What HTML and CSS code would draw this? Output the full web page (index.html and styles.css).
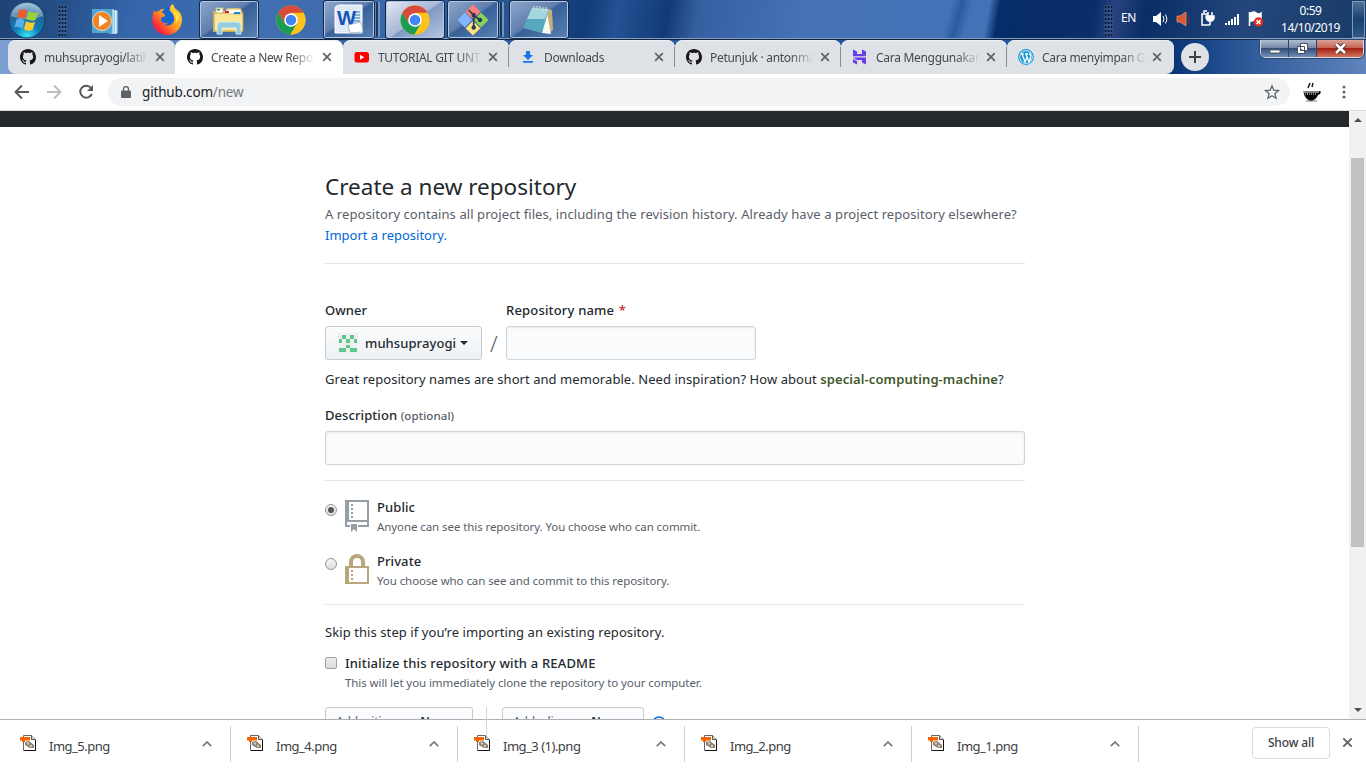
FILE: index.html
```html
<!DOCTYPE html>
<html lang="en">
<head>
<meta charset="utf-8">
<title>Create a New Repository</title>
<link rel="stylesheet" href="styles.css">
</head>
<body>
<svg class="defs" width="0" height="0">
  <defs>
    <symbol id="octocat" viewBox="0 0 16 16"><path fill="#191717" fill-rule="evenodd" d="M8 0C3.58 0 0 3.58 0 8c0 3.54 2.29 6.53 5.47 7.59.4.07.55-.17.55-.38 0-.19-.01-.82-.01-1.49-2.01.37-2.53-.49-2.69-.94-.09-.23-.48-.94-.82-1.13-.28-.15-.68-.52-.01-.53.63-.01 1.08.58 1.23.82.72 1.21 1.87.87 2.33.66.07-.52.28-.87.51-1.07-1.78-.2-3.64-.89-3.64-3.95 0-.87.31-1.59.82-2.15-.08-.2-.36-1.02.08-2.12 0 0 .67-.21 2.2.82.64-.18 1.32-.27 2-.27s1.36.09 2 .27c1.53-1.04 2.2-.82 2.2-.82.44 1.1.16 1.92.08 2.12.51.56.82 1.27.82 2.15 0 3.07-1.87 3.75-3.65 3.95.29.25.54.73.54 1.48 0 1.07-.01 1.93-.01 2.2 0 .21.15.46.55.38A8.01 8.01 0 0 0 16 8c0-4.42-3.58-8-8-8z"/></symbol>
    <symbol id="close" viewBox="0 0 10 10"><path d="M1.2 1.2l7.6 7.6M8.800 1.200L1.200 8.800" stroke="#5f6368" stroke-width="1.700"/></symbol>
    <symbol id="chrome" viewBox="0 0 30 30"><circle cx="15" cy="15" r="14.500" fill="#fbc116"/><path d="M2.440 7.750A14.500 14.500 0 0 0 14.500 29.500L21.200 18.500L9 18.500z" fill="#1a9c55"/><path d="M27.500 7.750A14.500 14.500 0 0 1 14.500 29.500L21.300 18V8z" fill="#fcc31e"/><path d="M2.440 7.750A14.500 14.500 0 0 1 27.560 7.750H15L9 18.500z" fill="#d84a3a"/><circle cx="15" cy="15" r="6.800" fill="#fff"/><circle cx="15" cy="15" r="5.300" fill="#4285f4"/></symbol>
    <symbol id="pngfile" viewBox="0 0 17 17"><path d="M3.500.5h8l4 4v11h-12z" fill="#fff" stroke="#666"/><path d="M15.500 5v10.500H4" fill="none" stroke="#111"/><path d="M11.500.5v4h4" fill="#ddd" stroke="#555"/><path d="M0 2h10v3.500H5v1.500H2V5.500H0z" fill="#f76500"/><path d="M5 7l4-1 5 4v3h-4l-5-3z" fill="#8f7f69"/><circle cx="8" cy="8.500" r="1.200" fill="#ccc"/><circle cx="11" cy="11" r="1.200" fill="#ccc"/></symbol>
    <symbol id="caret" viewBox="0 0 10 6"><path d="M.8 5.200L5 1l4.200 4.200" fill="none" stroke="#777a7d" stroke-width="1.700"/></symbol>
  </defs>
</svg>

<div class="taskbar">
  <svg class="orb" width="40" height="40"><defs><radialGradient id="og" cy=".95" r=".9"><stop offset="0" stop-color="#39e6f5"/><stop offset=".4" stop-color="#107bb8"/><stop offset=".75" stop-color="#236494"/><stop offset="1" stop-color="#8bb1cc"/></radialGradient></defs><circle cx="20" cy="20" r="18" fill="url(#og)" stroke="#123a66"/><path d="M4 16A16.500 16.500 0 0 1 36 16Q20 23 4 16z" fill="#b7d3e5" opacity=".45"/><path d="M12 10q5-2 8 1l-2 8q-4-3-8-1z" fill="#ef5a29"/><path d="M21.500 11q4 3 10 1l-3 8q-4 2-9-1z" fill="#9bcf3b"/><path d="M9.500 19.500q4-2 8 1l-2 8q-4-3-8-1z" fill="#5bb2ef"/><path d="M19 21q4 3 9 1l-2.500 8q-5 2-8.500-1z" fill="#fecc2c"/></svg>
  <div class="grip grip-left"></div>
  <svg class="media" width="28" height="28"><path d="M18 3h8v22h-8z" fill="#8ccbe5" stroke="#cdeaf5"/><path d="M1 1h21v24H1z" fill="#4fa5cd"/><path d="M22 1v25M24.500 2v24" stroke="#e3f5fb"/><circle cx="11" cy="13" r="9.500" fill="#f58220" stroke="#d9ddd9"/><path d="M8 7v12l9-6z" fill="#fff"/></svg>
  <svg class="firefox" width="32" height="32"><defs><linearGradient id="fg" x1="1" y1="0" x2="0" y2="1"><stop offset="0" stop-color="#fff044"/><stop offset=".5" stop-color="#ff9520"/><stop offset=".8" stop-color="#fa243d"/><stop offset="1" stop-color="#e3106d"/></linearGradient></defs><circle cx="16" cy="15" r="11.500" fill="#1468cd"/><path d="M3 6q-4 12 1 19 5 6 13 6 13-2 14-15 0-7-5-10-3-2-4-6-4 2-3 7 5 4 4 10-3 6-10 4 3 0 4-2-6 1-7-3 0-2 1-3 3 0 3-2-1-2-3-2 0-3 3-4-4-1-6 2l-4 1z" fill="url(#fg)"/><path d="M22 7q5 7 2 13 3-3 4-7 0-4-6-6z" fill="#ffe644"/></svg>
  <div class="app-button explorer"><svg width="36" height="32"><path d="M2 7h12l2-3h12l4 4v20H2z" fill="#d8bd5e"/><path d="M3 9h29v18H3z" fill="#fbe795" stroke="#bd9f44"/><path d="M5 4h7v5H5zM16 5h14v5H16z" fill="#fff" stroke="#cfbb72"/><path d="M6 5h3v1.500H6z" fill="#22a03f"/><path d="M14 7h4v2h-4z" fill="#d23"/><path d="M23 8h6v2h-6z" fill="#28c"/><path d="M6 30v-9q0-3 4-3h16q4 0 4 3v9h-5v-6H11v6z" fill="#8dcae4" stroke="#d6f4fc" opacity=".9"/></svg></div>
  <svg class="loose-chrome" width="30" height="30"><use href="#chrome"/></svg>
  <div class="app-button stacked word"><svg width="32" height="32"><path d="M7 1h22v28H2V5q0-4 5-4z" fill="#dfeaf6" stroke="#fff"/><path d="M20 8h7M20 11h7M20 14h7M20 17h7" stroke="#6c9bcf" stroke-width="1.500"/><text x="4" y="21" class="word-letter" textLength="19" lengthAdjust="spacingAndGlyphs">W</text><path d="M15 21l13-3 2 10-13 1z" fill="#fff" stroke="#8fa2bd" stroke-width=".7"/></svg></div>
  <div class="app-button chrome-button"><svg width="30" height="30"><use href="#chrome"/></svg></div>
  <div class="app-button stacked git"><svg width="34" height="34"><g transform="rotate(45 17 17)"><path d="M6 6h10.500v10.500H6z" fill="#ff7f7b"/><path d="M17.500 6H28v10.500H17.500z" fill="#88d15e"/><path d="M17.500 17.500H28V28H17.500z" fill="#ffe27d"/><path d="M6 17.500h10.500V28H6z" fill="#82b5ff"/></g><path d="M12.500 7l5.200 5v12M17.700 12l6 5" fill="none" stroke="#2b3c50" stroke-width="1.700"/><circle cx="17.700" cy="12" r="2.200" fill="#2b3c50"/><circle cx="24" cy="17" r="2.200" fill="#2b3c50"/><circle cx="17.700" cy="24.500" r="2.200" fill="#2b3c50"/></svg></div>
  <div class="app-button notepad"><svg width="34" height="32"><path d="M24 5l6 1 1 20-6 4z" fill="#c9b07a"/><path d="M24 4l5 26-9-1z" fill="#f7f9f4"/><path d="M10 4l17 1-7 24L1 24z" fill="#58a9bd"/><path d="M10 4l17 1-4 10L5 15z" fill="#a3d6dd"/><path d="M12 2v4M15 2v4M18 2v4M21 3v4M24 3v4" stroke="#d9e2da"/></svg></div>
  <div class="tray">
    <div class="grip"></div>
    <span class="language">EN</span>
    <svg class="tray-icons" width="112" height="24"><path d="M0 9h3l5-4v14l-5-4H0z" fill="#fff"/><path d="M10 9q2 3 0 6M12.500 7.500q3 4.500 0 9" fill="none" stroke="#fff"/><path d="M24 9h3l6-4v14l-6-4h-3z" fill="#d65732" stroke="#ffad8b" stroke-width=".6"/><path d="M35 8q3 4 0 8" fill="none" stroke="#8a3439"/><path d="M57 18h-8V7h6M51 6V4h3" fill="none" stroke="#fff" stroke-width="1.500"/><path d="M53 9h8v2q-1 3-3 3h-2q-3-1-3-5zM55 9V5M59 9V5M57 14v4" fill="#fff" stroke="#fff" stroke-width="1.500"/><path d="M72 18v-2h2v2zM75 18v-4h2v4zM78 18v-6h2v6zM81 18v-8h2v8zM84 18V7h2v11z" fill="#fff"/><path d="M96.500 5v14M98 6q3-2 5 0t5 0v8q-3 1-5 0t-5 0z" fill="#fff" stroke="#fff" stroke-width="1.500"/><circle cx="105.500" cy="15" r="4.700" fill="#e32b25"/><path d="M103.500 13l4 4M107.500 13l-4 4" stroke="#fff" stroke-width="1.500"/></svg>
    <div class="clock"><span class="time">0:59</span><span class="date">14/10/2019</span></div>
    <div class="show-desktop"></div>
  </div>
</div>

<div class="tabstrip">
  <div class="tab first"><svg class="favicon"><use href="#octocat"/></svg><span class="tab-title">muhsuprayogi/latih</span><svg class="tab-close"><use href="#close"/></svg></div>
  <div class="tab active"><svg class="favicon"><use href="#octocat"/></svg><span class="tab-title">Create a New Repo</span><svg class="tab-close"><use href="#close"/></svg></div>
  <div class="tab"><svg class="favicon" viewBox="0 0 16 16"><rect x=".5" y="3" width="14.500" height="10.500" rx="2.500" fill="#f00"/><path d="M6 5.700v5l4.300-2.500z" fill="#fff"/></svg><span class="tab-title">TUTORIAL GIT UNT</span><svg class="tab-close"><use href="#close"/></svg></div>
  <div class="tab divided"><svg class="favicon" viewBox="0 0 16 16"><path d="M6 2h4v4h3L8 11 3 6h3zM3 12h10v1.700H3z" fill="#1a73e8"/></svg><span class="tab-title">Downloads</span><svg class="tab-close"><use href="#close"/></svg></div>
  <div class="tab divided"><svg class="favicon"><use href="#octocat"/></svg><span class="tab-title">Petunjuk · antonma</span><svg class="tab-close"><use href="#close"/></svg></div>
  <div class="tab divided"><svg class="favicon" viewBox="0 0 16 16"><path d="M1 .5l4 2V5h5l4 2.300H1zM10 .5l4 2V7l-4-2zM1 8.500h13v7l-4-2V11H5L1 8.500zM1 10l4 2v3.500l-4-2z" fill="#673de6"/></svg><span class="tab-title">Cara Menggunakan</span><svg class="tab-close"><use href="#close"/></svg></div>
  <div class="tab divided last"><svg class="favicon" viewBox="0 0 16 16"><circle cx="8" cy="8" r="7.300" fill="#fff" stroke="#1998d0" stroke-width="1.200"/><circle cx="8" cy="8" r="6" fill="#1998d0"/><path d="M2.800 5h3M4 5l3 8 2-5M7 5h3M8 5l3 8 2-6q-2-2-1-3" fill="none" stroke="#fff" stroke-width="1.300"/></svg><span class="tab-title">Cara menyimpan G</span><svg class="tab-close"><use href="#close"/></svg></div>
  <div class="new-tab"><svg width="14" height="14"><path d="M7 1v12M1 7h12" stroke="#3c4043" stroke-width="2"/></svg></div>
  <div class="window-buttons">
    <div class="window-button minimize"><svg width="12" height="5"><path d="M1 1h10v3H1z" fill="#fff" stroke="#525963"/></svg></div>
    <div class="window-button restore"><svg width="13" height="13"><path d="M4.500 1.500h7v7h-7zM1.500 4.500h7v7h-7z" fill="#fff" stroke="#475365"/><path d="M4 7h2v2H4z" fill="#475365"/></svg></div>
    <div class="window-button shut"><svg width="13" height="11"><path d="M2 1l9 9M11 1L2 10" stroke="#542a2b" stroke-width="4.500"/><path d="M2 1l9 9M11 1L2 10" stroke="#fff" stroke-width="2.600"/></svg></div>
  </div>
</div>

<div class="toolbar">
  <svg class="nav-icons" width="94" height="36"><path d="M29 18H16M22 11.500L15.500 18l6.500 6.500" fill="none" stroke="#55585c" stroke-width="1.900"/><path d="M47 18h13M54 11.500l6.500 6.500-6.500 6.500" fill="none" stroke="#bbbdbf" stroke-width="1.900"/><path d="M91 14a6 6 0 1 0 .8 6" fill="none" stroke="#55585c" stroke-width="2"/><path d="M93 11v6h-6z" fill="#55585c"/></svg>
  <div class="omnibox">
    <svg class="lock" width="10" height="12"><path d="M1 4.500h8q1 0 1 1V11q0 1-1 1H1q-1 0-1-1V5.500q0-1 1-1z" fill="#5f6368"/><path d="M2.500 5V3a2.500 2.500 0 0 1 5 0v2" fill="none" stroke="#5f6368" stroke-width="1.300"/></svg>
    <span class="address">github.com<span class="path">/new</span></span>
    <svg class="star" viewBox="0 0 16 16"><path d="M8 1.900l1.800 4.300 4.700.4-3.600 3 1.100 4.600-4-2.400-4 2.400 1.100-4.600-3.600-3 4.700-.4z" fill="none" stroke="#5f6368" stroke-width="1.300"/></svg>
  </div>
  <svg class="extension" width="20" height="22"><path d="M6 7l2-5M10 6l1-4" stroke="#111" stroke-width="1.400"/><path d="M1 10h16q3 0 1 3l-2 1q-2 5-7 6-6-1-8-10z" fill="#050505"/><path d="M1 11h16" stroke="#fff"/><path d="M3 13h12" stroke="#fff" stroke-dasharray="1 1"/><path d="M4 20h11" stroke="#777"/></svg>
  <svg class="more" width="4" height="14"><circle cx="2" cy="2" r="1.500"/><circle cx="2" cy="7" r="1.500"/><circle cx="2" cy="12" r="1.500"/></svg>
</div>

<div class="viewport">
  <div class="site-page">
    <div class="site-header"></div>
    <main class="form">
      <h1 class="heading">Create a new repository</h1>
      <p class="intro"><span class="intro-line">A repository contains all project files, including the revision history. Already have a project repository elsewhere?</span><br><a class="link">Import a repository.</a></p>
      <div class="name-row">
        <div class="owner-field"><label class="label">Owner</label><div class="owner-button"><svg class="avatar" width="20" height="20"><path d="M0 0h20v20H0z" fill="#f0f0f0"/><path d="M4 2h4v4h4V2h4v4h3v4h-3V6h-4v4H8V6H4v4H1V6h3zM8 12h4v3h7v4h-7v-4H8v4H1v-4h7z" fill="#5bc98b"/></svg><span class="owner-name">muhsuprayogi</span><span class="drop-arrow"></span></div></div>
        <span class="slash">/</span>
        <div class="repo-field"><label class="label repo-label">Repository name <span class="required">*</span></label><div class="input"></div></div>
      </div>
      <p class="hint"><span class="hint-text">Great repository names are short and memorable. Need inspiration? How about </span><strong class="suggestion">special-computing-machine</strong>?</p>
      <label class="label description-label">Description <span class="optional">(optional)</span></label>
      <div class="input"></div>
      <div class="visibility">
        <div class="choice"><span class="radio checked"></span><svg class="choice-icon" width="24" height="32"><path d="M1 1h22v25H1zM1 21h22" fill="none" stroke="#959da5" stroke-width="2"/><path d="M0 0h4v21H0z" fill="#959da5"/><path d="M7 4v15" stroke="#959da5" stroke-width="2" stroke-dasharray="2 2"/><path d="M5 24h8v3H5z" fill="#fff"/><path d="M6 24h6v8l-3-3-3 3z" fill="#959da5"/></svg><div class="choice-copy"><span class="choice-name">Public</span><span class="choice-note public-note">Anyone can see this repository. You choose who can commit.</span></div></div>
        <div class="choice"><span class="radio"></span><svg class="choice-icon" width="24" height="32"><path d="M6 13V8a6 6 0 0 1 12 0v5" fill="none" stroke="#b9a77b" stroke-width="4"/><path d="M1 13h22v16H1z" fill="#fff" stroke="#b9a77b" stroke-width="2"/><path d="M0 13h4v17H0z" fill="#b9a77b"/><path d="M7 16v11" stroke="#b9a77b" stroke-width="2" stroke-dasharray="2 2"/></svg><div class="choice-copy"><span class="choice-name">Private</span><span class="choice-note private-note">You choose who can see and commit to this repository.</span></div></div>
      </div>
      <p class="skip">Skip this step if you’re importing an existing repository.</p>
      <div class="readme"><span class="checkbox"></span><div><div class="readme-title">Initialize this repository with a README</div><div class="readme-note">This will let you immediately clone the repository to your computer.</div></div></div>
      <div class="extras"><div class="select ignore">Add .gitignore: <b>None</b></div><div class="select license">Add a license: <b>None</b></div><svg width="14" height="14"><circle cx="7" cy="7" r="6" fill="none" stroke="#0366d6" stroke-width="1.500"/></svg></div>
    </main>
  </div>
  <div class="scrollbar"><i class="arrow up"></i><div class="thumb"></div><i class="arrow down"></i></div>
</div>

<div class="shelf">
  <div class="download"><svg class="file-icon"><use href="#pngfile"/></svg><span class="file-name">Img_5.png</span><svg class="caret"><use href="#caret"/></svg></div>
  <div class="download"><svg class="file-icon"><use href="#pngfile"/></svg><span class="file-name">Img_4.png</span><svg class="caret"><use href="#caret"/></svg></div>
  <div class="download"><svg class="file-icon"><use href="#pngfile"/></svg><span class="file-name">Img_3 (1).png</span><svg class="caret"><use href="#caret"/></svg></div>
  <div class="download"><svg class="file-icon"><use href="#pngfile"/></svg><span class="file-name">Img_2.png</span><svg class="caret"><use href="#caret"/></svg></div>
  <div class="download"><svg class="file-icon"><use href="#pngfile"/></svg><span class="file-name">Img_1.png</span><svg class="caret"><use href="#caret"/></svg></div>
  <div class="show-all">Show all</div>
  <svg class="shelf-close"><use href="#close"/></svg>
</div>
</body>
</html>
```
FILE: styles.css
```css
* { box-sizing: border-box; }
body { margin: 0; width: 1366px; height: 768px; overflow: hidden; background: #fff; color: #24292e; font: 13px/21px "Noto Sans", sans-serif; display: flex; flex-direction: column; }
.defs { position: absolute; }
svg { display: block; flex: none; }
p, h1 { margin: 0; }
span, label { white-space: nowrap; }

.taskbar { height: 40px; flex: none; display: flex; align-items: flex-start; border-bottom: 1px solid #14263f; box-shadow: inset 0 -1px #809fc4; background: linear-gradient(105deg, transparent 920px, #2a5c9f 930px, transparent 940px), linear-gradient(100deg, #1f4275 0, #254f88 60px, #3565aa 130px, #426fb1 270px, #3b68a9 370px, #28558f 500px, #123b79 580px, #245293 610px, #123a77 660px, #365fa0 690px, #4572b5 790px, #4372b6 975px, #062c69 986px, #0a2e68 1080px, #2a4380 1100px, #092e65 1130px, #24477b 1230px, #173965 1366px); }
.orb { margin-left: 7px; }
.grip { width: 9px; height: 31px; margin-top: 5px; background: radial-gradient(circle, #07152c 0.9px, transparent 1.2px) 0 0 / 3px 4px, #54739c55; }
.grip-left { margin-left: 11px; }
.media { margin: 8px 0 0 24px; }
.firefox { margin: 4px 0 0 32px; }
.app-button { height: 37px; margin-top: 1px; display: flex; align-items: center; justify-content: center; flex: none; border: 1px solid #b6c7dd; border-radius: 2px; outline: 1px solid #0e2952; background: linear-gradient(145deg, #8da5cc, #617fae 45%, #38619a 50%, #587fb1); }
.explorer { width: 58px; margin-left: 17px; }
.loose-chrome { margin: 5px 0 0 18px; }
.word { width: 50px; margin-left: 18px; }
.chrome-button { width: 58px; margin-left: 12px; background: linear-gradient(145deg, #e2e8f3, #a8b7d7 50%, #7e98c5 52%, #b5c7df); }
.git { width: 50px; margin-left: 4px; }
.notepad { width: 58px; margin-left: 12px; }
.stacked { box-shadow: 3px 0 0 -1px #6382ae, 5px 0 0 -1px #173767, 7px 0 0 -1px #7893b9; }
.word-letter { font: bold 21px "Liberation Sans", sans-serif; fill: #1553b5; }
.tray { margin: 0 1px 0 auto; display: flex; height: 39px; color: #fff; }
.language { margin: 7px 0 0 8px; font-size: 12px; width: 31px; letter-spacing: -.3px; }
.tray-icons { margin: 7px 0 0 1px; }
.clock { width: 73px; margin-left: 9px; display: flex; flex-direction: column; align-items: center; font-size: 12px; line-height: 17px; padding-top: 2px; margin-right: 5px; letter-spacing: -.5px; }
.show-desktop { width: 13px; height: 37px; margin-top: 1px; border: 1px solid #7d99bd; background: linear-gradient(#4f7198, #173f70 50%, #315985); }

.tabstrip { height: 34px; flex: none; display: flex; padding-left: 8px; background: linear-gradient(90deg, #7da0d3, #2a569b 30%, #2257a0 80%, #0a3576 1175px, #2f5b9b 1250px, #5f83bb 1366px); }
.tab { width: 166px; height: 34px; padding: 0 11px; display: flex; align-items: center; background: #dee1e6; border-radius: 8px 8px 0 0; box-shadow: inset 0 1px #edf0f5; position: relative; }
.first { width: 167px; padding-left: 12px; padding-right: 10px; }
.active { width: 168px; padding-left: 12px; padding-right: 11px; background: #fff; }
.last { width: 167px; padding-right: 12px; border-radius: 8px 8px 8px 0; }
.first { border-radius: 8px 8px 0 8px; }
.divided::before { content: ""; position: absolute; left: -1px; top: 7px; width: 1px; height: 20px; background: #858b93; }
.favicon { width: 16px; height: 16px; }
.tab-title { flex: 1; min-width: 0; margin: 0 6px 0 8px; font-size: 12px; letter-spacing: -.3px; color: #45484c; mask-image: linear-gradient(90deg, #000 80px, transparent 104px); }
.tab-close { width: 10px; height: 10px; }
.new-tab { width: 28px; height: 28px; margin: 3px 0 0 7px; border-radius: 50%; background: #dee1e6; display: grid; place-items: center; }
.window-buttons { height: 18px; display: flex; margin-left: 51px; border: 1px solid #d1d9e8; outline: 1px solid #304667; border-top: 0; border-radius: 0 0 5px 5px; overflow: hidden; }
.window-button { display: grid; place-items: center; width: 28px; background: linear-gradient(#b0bed2, #7286a6 48%, #324e7b 50%, #7290b9); border-right: 1px solid #34445e; }
.minimize { padding-top: 5px; }
.shut { width: 46px; border: 0; background: linear-gradient(#daa398, #c3614d 48%, #a42113 50%, #d4755e); }

.toolbar { height: 37px; flex: none; display: flex; align-items: center; border-bottom: 1px solid #dadce0; padding-right: 20px; }
.omnibox { margin-left: 14px; width: 1182px; height: 28px; border-radius: 14px; background: #f1f3f4; display: flex; align-items: center; padding: 0 10px 0 13px; }
.address { margin-left: 11px; font-size: 13.5px; letter-spacing: -.17px; color: #202124; }
.path { color: #74787c; }
.star { width: 16px; height: 16px; margin-left: auto; }
.extension { margin-left: 12px; }
.more { margin-left: auto; fill: #5f6368; }

.viewport { height: 608px; flex: none; display: flex; }
.site-page { width: 1349px; overflow: hidden; }
.site-header { height: 16px; background: #24292e; }
.form { width: 700px; margin: 43px 0 0 325px; letter-spacing: .08px; }
.heading { font-size: 22.5px; letter-spacing: 0; font-weight: 400; line-height: 34px; height: 34px; white-space: nowrap; }
.intro { color: #586069; line-height: 21px; white-space: nowrap; padding-bottom: 17px; border-bottom: 1px solid #e1e4e8; height: 60px; }
.link { color: #0366d6; letter-spacing: 0; }
.name-row { display: flex; margin-top: 36px; }
.label { display: block; height: 26px; line-height: 21px; font-weight: 500; }
.repo-label { letter-spacing: .18px; }
.owner-field { width: 157px; }
.repo-field { width: 250px; }
.slash { width: 24px; padding: 33px 0 0 8px; font-size: 22px; font-weight: 300; line-height: 21px; color: #586069; }
.required { color: #cb2431; margin-left: 1px; }
.input { height: 34px; border: 1px solid #d1d5da; border-radius: 3px; background: #fafbfc; box-shadow: inset 0 1px 2px rgba(27,31,35,.075); }
.owner-button { height: 34px; display: flex; align-items: center; padding-left: 12px; border: 1px solid #c7cace; border-radius: 3px; background: linear-gradient(#fafbfc, #eff3f6 90%); font-weight: 500; }
.owner-name { margin-left: 7px; }
.drop-arrow { border: 4px solid transparent; border-top-color: #24292e; border-bottom: 0; margin-left: 4px; }
.hint { margin-top: 9px; height: 21px; white-space: nowrap; }
.hint-text { letter-spacing: .06px; }
.suggestion { font-weight: 600; color: #3f5a2c; letter-spacing: .1px; }
.description-label { margin-top: 15px; }
.optional { color: #586069; font-size: 11.5px; }
.visibility { margin-top: 15px; height: 125px; border: solid #e1e4e8; border-width: 1px 0; padding-top: 16px; }
.choice { display: flex; height: 54px; }
.radio { width: 12px; height: 12px; border: 1px solid #969696; border-radius: 50%; background: linear-gradient(#f5f5f5, #dcdcdc); margin: 7px 8px 0 0; display: grid; place-items: center; }
.checked::after { content: ""; width: 6px; height: 6px; border-radius: 50%; background: #555; }
.choice-icon { margin-top: 3px; }
.choice-copy { margin-left: 8px; display: flex; flex-direction: column; }
.choice-name { height: 20px; font-weight: 500; }
.choice-note, .readme-note { font-size: 11.5px; line-height: 19px; color: #586069; letter-spacing: -.08px; }
.skip { margin-top: 17px; white-space: nowrap; }
.readme { display: flex; margin-top: 10px; }
.checkbox { width: 12px; height: 12px; margin: 4px 8px 0 0; border: 1px solid #a0a0a0; border-radius: 2px; background: linear-gradient(#eee, #dcdcdc); }
.readme-title { font-weight: 500; height: 20px; letter-spacing: .17px; }
.extras { display: flex; margin-top: 15px; }
.select { height: 28px; border: 1px solid #c7cace; border-radius: 3px; background: #fafbfc; padding: 3px 10px; font-size: 12px; letter-spacing: -.15px; white-space: nowrap; color: #586069; }
.select b { color: #24292e; font-weight: 600; }
.ignore { width: 148px; margin-right: 14px; }
.license { width: 142px; margin-left: 15px; }
.license::before { content: ""; position: absolute; width: 1px; height: 28px; margin: -4px 0 0 -27px; background: #d1d5da; }
.extras svg { margin: 9px 0 0 8px; }
.scrollbar { width: 17px; background: #f1f1f1; display: flex; flex-direction: column; align-items: center; }
.thumb { width: 13px; height: 389px; margin: 36px 0 auto; background: #c1c1c1; }
.arrow { border: 4px solid transparent; }
.up { border-top: 0; border-bottom-color: #505050; margin-top: 7px; }
.down { border-bottom: 0; border-top-color: #505050; margin-bottom: 7px; }

.shelf { height: 49px; flex: none; display: flex; border-top: 1px solid #aeb0b3; padding-top: 6px; background: #fff; }
.download { width: 227px; height: 36px; padding: 0 18px 0 16px; border-right: 1px solid #ccced0; display: flex; align-items: flex-start; }
.download:first-child { width: 231px; padding-left: 20px; }
.file-icon { width: 17px; height: 17px; margin-top: 9px; }
.file-name { font-size: 13px; line-height: 20px; margin: 10px 0 0 12px; letter-spacing: -.5px; color: #3c4043; }
.caret { width: 10px; height: 6px; margin: 15px 0 0 auto; }
.show-all { width: 78px; height: 32px; margin: 1px 12px 0 auto; border: 1px solid #dadce0; border-radius: 4px; text-align: center; line-height: 29px; font-size: 12px; font-weight: 500; letter-spacing: -.15px; color: #3c4043; }
.shelf-close { width: 11px; height: 11px; margin: 11px 13px 0 0; }
```
